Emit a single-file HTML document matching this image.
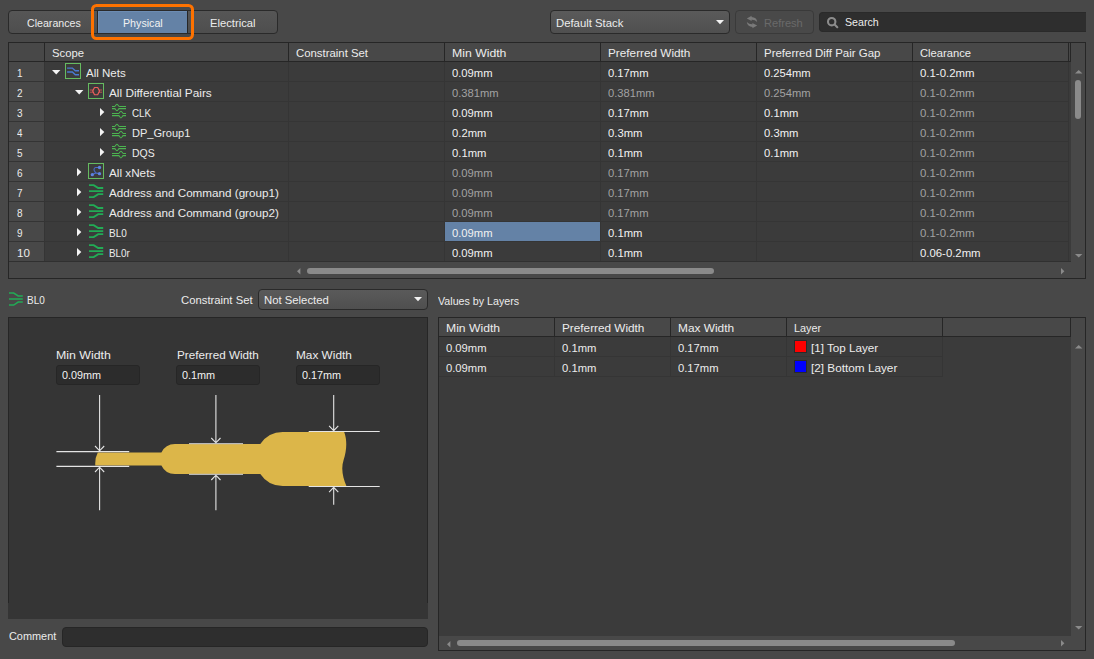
<!DOCTYPE html>
<html>
<head>
<meta charset="utf-8">
<title>Constraint Manager</title>
<style>
html,body{margin:0;padding:0;}
body{width:1094px;height:659px;background:#484848;overflow:hidden;position:relative;
  font-family:"Liberation Sans",sans-serif;font-size:11.5px;color:#ececec;}
.a{position:absolute;}
.t{position:absolute;white-space:nowrap;line-height:14px;transform-origin:0 0;}
.dk{position:absolute;background:#262626;}
.rs{position:absolute;height:1px;background:#353535;}
.cs{position:absolute;width:1px;background:#353535;}
.dd{position:absolute;box-sizing:border-box;border:1px solid #2a2a2a;border-radius:4px;background:linear-gradient(#5a5a5a,#4f4f4f);}
.inp{position:absolute;box-sizing:border-box;border:1px solid #262626;border-radius:3px;background:#2c2c2c;}
.thumb{position:absolute;background:#8a8a8a;border-radius:3px;}
svg{position:absolute;overflow:visible;}
</style>
</head>
<body>
<!-- ===== top toolbar ===== -->
<div class="dd" style="left:8px;top:10px;width:270px;height:24px;background:linear-gradient(#565656,#4e4e4e);"></div>
<div class="a" style="left:98px;top:11px;width:89px;height:22px;background:#6482a6;box-shadow:inset 1px 1px 0 #6c8cb3;"></div>
<div class="dk" style="left:97px;top:11px;width:1px;height:22px;"></div>
<div class="dk" style="left:187px;top:11px;width:1px;height:22px;"></div>
<svg style="left:88px;top:1px" width="110" height="42"><rect x="4.5" y="4.5" width="100" height="33" rx="4" ry="4" fill="none" stroke="#fe7200" stroke-width="3"/></svg>

<div class="dd" style="left:550px;top:10px;width:180px;height:24px;"></div>
<svg style="left:716px;top:20px" width="8" height="5"><path d="M0 0H8L4 4.3Z" fill="#f2f2f2"/></svg>

<div class="a" style="left:735px;top:10px;width:79px;height:24px;box-sizing:border-box;border:1px solid #3a3a3a;border-radius:4px;background:#494949;"></div>
<svg style="left:740px;top:8px" width="20" height="24" viewBox="740 8 20 24">
 <path id="ra" d="M746.8 18.4L751.7 15.7L751.5 17.1Q756.6 17.3 757.2 22Q754.9 19.5 751.5 19.7L751.7 21Z" fill="#7a7a7a"/>
 <path d="M746.8 18.4L751.7 15.7L751.5 17.1Q756.6 17.3 757.2 22Q754.9 19.5 751.5 19.7L751.7 21Z" fill="#7a7a7a" transform="rotate(180 752 22)"/>
</svg>

<div class="a" style="left:819px;top:12px;width:267px;height:20px;box-sizing:border-box;background:#2e2e2e;border:1px solid #2a2a2a;border-right:none;border-radius:4px 0 0 4px;"></div>
<svg style="left:820px;top:10px" width="24" height="24" viewBox="820 10 24 24">
 <circle cx="831.7" cy="21.7" r="3.7" fill="none" stroke="#8c8c8c" stroke-width="2.1"/>
 <path d="M834.6 24.6L837.3 27.2" stroke="#8c8c8c" stroke-width="2.1" stroke-linecap="round"/>
</svg>

<!-- ===== main table ===== -->
<div class="a" style="left:8px;top:42px;width:1078px;height:237px;box-sizing:border-box;border:1px solid #262626;background:#484848;"></div>
<div class="a" style="left:45px;top:62px;width:1026px;height:200px;background:#3b3b3b;"></div>
<div class="a" style="left:44px;top:62px;width:1px;height:200px;background:#353535;"></div>
<div class="a" style="left:445px;top:222px;width:155px;height:19px;background:#6482a6;"></div>
<div class="dk" style="left:9px;top:61px;width:1062px;height:1px;"></div>
<div class="dk" style="left:44px;top:43px;width:1px;height:18px;"></div>
<div class="dk" style="left:288px;top:43px;width:1px;height:18px;"></div>
<div class="dk" style="left:444px;top:43px;width:1px;height:18px;"></div>
<div class="dk" style="left:600px;top:43px;width:1px;height:18px;"></div>
<div class="dk" style="left:756px;top:43px;width:1px;height:18px;"></div>
<div class="dk" style="left:912px;top:43px;width:1px;height:18px;"></div>
<div class="dk" style="left:1068px;top:43px;width:1px;height:18px;"></div>
<div class="dk" style="left:1070px;top:43px;width:1px;height:18px;"></div>
<div class="a" style="left:9px;top:81px;width:35px;height:1px;background:#343434;"></div>
<div class="rs" style="left:45px;top:81px;width:1024px;"></div>
<div class="a" style="left:9px;top:101px;width:35px;height:1px;background:#343434;"></div>
<div class="rs" style="left:45px;top:101px;width:1024px;"></div>
<div class="a" style="left:9px;top:121px;width:35px;height:1px;background:#343434;"></div>
<div class="rs" style="left:45px;top:121px;width:1024px;"></div>
<div class="a" style="left:9px;top:141px;width:35px;height:1px;background:#343434;"></div>
<div class="rs" style="left:45px;top:141px;width:1024px;"></div>
<div class="a" style="left:9px;top:161px;width:35px;height:1px;background:#343434;"></div>
<div class="rs" style="left:45px;top:161px;width:1024px;"></div>
<div class="a" style="left:9px;top:181px;width:35px;height:1px;background:#343434;"></div>
<div class="rs" style="left:45px;top:181px;width:1024px;"></div>
<div class="a" style="left:9px;top:201px;width:35px;height:1px;background:#343434;"></div>
<div class="rs" style="left:45px;top:201px;width:1024px;"></div>
<div class="a" style="left:9px;top:221px;width:35px;height:1px;background:#343434;"></div>
<div class="rs" style="left:45px;top:221px;width:1024px;"></div>
<div class="a" style="left:9px;top:241px;width:35px;height:1px;background:#343434;"></div>
<div class="rs" style="left:45px;top:241px;width:1024px;"></div>
<div class="a" style="left:9px;top:261px;width:35px;height:1px;background:#343434;"></div>
<div class="rs" style="left:45px;top:261px;width:1024px;"></div>
<div class="cs" style="left:288px;top:62px;height:200px;"></div>
<div class="cs" style="left:444px;top:62px;height:200px;"></div>
<div class="cs" style="left:600px;top:62px;height:200px;"></div>
<div class="cs" style="left:756px;top:62px;height:200px;"></div>
<div class="cs" style="left:912px;top:62px;height:200px;"></div>
<div class="cs" style="left:1068px;top:62px;height:200px;"></div>
<div class="a" style="left:9px;top:261px;width:1062px;height:1px;background:#303030;"></div>

<!-- scrollbars main -->
<svg style="left:1075px;top:70px" width="8" height="4"><path d="M0 3.6H7.4L3.7 0Z" fill="#8a8a8a"/></svg>
<svg style="left:1075px;top:253.5px" width="8" height="4"><path d="M0 0H7.4L3.7 3.6Z" fill="#8a8a8a"/></svg>
<div class="thumb" style="left:1075px;top:80px;width:6px;height:39px;"></div>
<svg style="left:297px;top:267.5px" width="4" height="7"><path d="M3.4 0V6.6L0 3.3Z" fill="#8a8a8a"/></svg>
<svg style="left:1061px;top:267.5px" width="4" height="7"><path d="M0 0V6.6L3.4 3.3Z" fill="#8a8a8a"/></svg>
<div class="thumb" style="left:307px;top:268px;width:407px;height:6px;"></div>

<svg style="left:51.8px;top:69.6px" width="9" height="5"><path d="M0 0H8.4L4.2 4.5Z" fill="#f4f4f4"/></svg>
<svg style="left:65px;top:63px" width="16" height="16" viewBox="0 0 16 16"><rect x="0.5" y="0.5" width="15" height="15" fill="none" stroke="#66bb60" stroke-width="1"/><path d="M2.1 5.1H7.4L10.3 7.7H14M2.1 9H7.4L10.3 11.8H14" fill="none" stroke="#4a7ad2" stroke-width="1.4"/></svg>
<svg style="left:74.8px;top:89.6px" width="9" height="5"><path d="M0 0H8.4L4.2 4.5Z" fill="#f4f4f4"/></svg>
<svg style="left:88px;top:83px" width="16" height="16" viewBox="0 0 16 16"><rect x="0.5" y="0.5" width="15" height="15" fill="none" stroke="#66bb60" stroke-width="1"/><path d="M1.9 7H5.3M1.9 9.2H5.3M10.9 7H14.1M10.9 9.2H14.1" fill="none" stroke="#c05250" stroke-width="1"/><path d="M4.7 8.1L6.5 4.5H9.7L11.5 8.1L9.7 11.7H6.5Z" fill="none" stroke="#ee605c" stroke-width="1.15" stroke-linejoin="round"/></svg>
<svg style="left:100px;top:108px" width="5" height="9"><path d="M0 0V8.2L4.3 4.1Z" fill="#f4f4f4"/></svg>
<svg style="left:112px;top:102px" width="14" height="18" viewBox="0 0 14 18"><path d="M0 4.4H2.6Q3.2 4.4 3.6 3.6Q4.2 2.2 4.95 2.2Q5.7 2.2 6.3 3.6Q6.7 4.4 7.3 4.4H14M0 6.6H2.6Q3.2 6.6 3.6 7.4Q4.2 8.8 4.95 8.8Q5.7 8.8 6.3 7.4Q6.7 6.6 7.3 6.6H14M0 11.4H6.6Q7.2 11.4 7.6 10.6Q8.2 9.3 8.95 9.3Q9.7 9.3 10.3 10.6Q10.7 11.4 11.3 11.4H14M0 13.6H6.6Q7.2 13.6 7.6 14.4Q8.2 15.9 8.95 15.9Q9.7 15.9 10.3 14.4Q10.7 13.6 11.3 13.6H14" fill="none" stroke="#4cb450" stroke-width="1.05"/></svg>
<svg style="left:100px;top:128px" width="5" height="9"><path d="M0 0V8.2L4.3 4.1Z" fill="#f4f4f4"/></svg>
<svg style="left:112px;top:122px" width="14" height="18" viewBox="0 0 14 18"><path d="M0 4.4H2.6Q3.2 4.4 3.6 3.6Q4.2 2.2 4.95 2.2Q5.7 2.2 6.3 3.6Q6.7 4.4 7.3 4.4H14M0 6.6H2.6Q3.2 6.6 3.6 7.4Q4.2 8.8 4.95 8.8Q5.7 8.8 6.3 7.4Q6.7 6.6 7.3 6.6H14M0 11.4H6.6Q7.2 11.4 7.6 10.6Q8.2 9.3 8.95 9.3Q9.7 9.3 10.3 10.6Q10.7 11.4 11.3 11.4H14M0 13.6H6.6Q7.2 13.6 7.6 14.4Q8.2 15.9 8.95 15.9Q9.7 15.9 10.3 14.4Q10.7 13.6 11.3 13.6H14" fill="none" stroke="#4cb450" stroke-width="1.05"/></svg>
<svg style="left:100px;top:148px" width="5" height="9"><path d="M0 0V8.2L4.3 4.1Z" fill="#f4f4f4"/></svg>
<svg style="left:112px;top:142px" width="14" height="18" viewBox="0 0 14 18"><path d="M0 4.4H2.6Q3.2 4.4 3.6 3.6Q4.2 2.2 4.95 2.2Q5.7 2.2 6.3 3.6Q6.7 4.4 7.3 4.4H14M0 6.6H2.6Q3.2 6.6 3.6 7.4Q4.2 8.8 4.95 8.8Q5.7 8.8 6.3 7.4Q6.7 6.6 7.3 6.6H14M0 11.4H6.6Q7.2 11.4 7.6 10.6Q8.2 9.3 8.95 9.3Q9.7 9.3 10.3 10.6Q10.7 11.4 11.3 11.4H14M0 13.6H6.6Q7.2 13.6 7.6 14.4Q8.2 15.9 8.95 15.9Q9.7 15.9 10.3 14.4Q10.7 13.6 11.3 13.6H14" fill="none" stroke="#4cb450" stroke-width="1.05"/></svg>
<svg style="left:77px;top:168px" width="5" height="9"><path d="M0 0V8.2L4.3 4.1Z" fill="#f4f4f4"/></svg>
<svg style="left:88px;top:163px" width="16" height="16" viewBox="0 0 16 16"><rect x="0.5" y="0.5" width="15" height="15" fill="none" stroke="#66bb60" stroke-width="1"/><path d="M11.5 4.5H7.8Q6 4.6 6 6.4Q6 7.6 6.8 8.4L7.6 9.9L11.5 10.7M7.6 9.9L4.3 11.7" fill="none" stroke="#4a6ccc" stroke-width="1.1"/><circle cx="11.5" cy="4.5" r="1.65" fill="#5f83e0"/><circle cx="11.5" cy="10.7" r="1.65" fill="#5f83e0"/><circle cx="4.3" cy="11.7" r="1.65" fill="#5f83e0"/></svg>
<svg style="left:77px;top:188px" width="5" height="9"><path d="M0 0V8.2L4.3 4.1Z" fill="#f4f4f4"/></svg>
<svg style="left:88.9px;top:183.9px" width="15" height="15" viewBox="0 0 15 15"><path d="M0 1.1H4.7L9.2 4H14.2M0 7.1H14.2M0 13.1H4.7L9.2 10.1H14.2" fill="none" stroke="#22ab55" stroke-width="1.9"/></svg>
<svg style="left:77px;top:208px" width="5" height="9"><path d="M0 0V8.2L4.3 4.1Z" fill="#f4f4f4"/></svg>
<svg style="left:88.9px;top:203.9px" width="15" height="15" viewBox="0 0 15 15"><path d="M0 1.1H4.7L9.2 4H14.2M0 7.1H14.2M0 13.1H4.7L9.2 10.1H14.2" fill="none" stroke="#22ab55" stroke-width="1.9"/></svg>
<svg style="left:77px;top:228px" width="5" height="9"><path d="M0 0V8.2L4.3 4.1Z" fill="#f4f4f4"/></svg>
<svg style="left:88.9px;top:223.9px" width="15" height="15" viewBox="0 0 15 15"><path d="M0 1.1H4.7L9.2 4H14.2M0 7.1H14.2M0 13.1H4.7L9.2 10.1H14.2" fill="none" stroke="#22ab55" stroke-width="1.9"/></svg>
<svg style="left:77px;top:248px" width="5" height="9"><path d="M0 0V8.2L4.3 4.1Z" fill="#f4f4f4"/></svg>
<svg style="left:88.9px;top:243.9px" width="15" height="15" viewBox="0 0 15 15"><path d="M0 1.1H4.7L9.2 4H14.2M0 7.1H14.2M0 13.1H4.7L9.2 10.1H14.2" fill="none" stroke="#22ab55" stroke-width="1.9"/></svg>
<svg style="left:9px;top:292.3px" width="15" height="15" viewBox="0 0 15 15"><path d="M0 1.1H4.7L9.2 4H13.8M0 7.1H13.8M0 13.1H4.7L9.2 10.1H13.8" fill="none" stroke="#22ab55" stroke-width="1.5"/></svg>

<!-- ===== lower left ===== -->
<div class="dd" style="left:258px;top:289px;width:170px;height:21px;"></div>
<svg style="left:414px;top:297px" width="8" height="5"><path d="M0 0H8L4 4.3Z" fill="#f2f2f2"/></svg>
<div class="a" style="left:8px;top:317px;width:420px;height:302px;background:#353535;"></div>
<div class="dk" style="left:8px;top:317px;width:420px;height:1px;"></div>
<div class="dk" style="left:8px;top:317px;width:1px;height:286px;"></div>
<div class="dk" style="left:427px;top:317px;width:1px;height:286px;"></div>
<div class="inp" style="left:56px;top:365px;width:84px;height:20px;"></div>
<div class="inp" style="left:176px;top:365px;width:84px;height:20px;"></div>
<div class="inp" style="left:296px;top:365px;width:84px;height:20px;"></div>
<svg style="left:0;top:0" width="1094" height="659">
<path d="M97.8 452.5H161.4A15 15 0 0 1 175 444H260.3A27 27 0 0 1 283 432H344.2C347.5 441 346.5 451 343.6 460S343 478 346.4 486H283A27 27 0 0 1 260.3 474H175A15 15 0 0 1 161.4 465.5H95.3Q94.8 458 97.8 452.5Z" fill="#dcb649"/>
<path d="M56.4 451.6H129.2M56.4 466.4H129.2" stroke="#e4e4e4" stroke-width="1.1"/>
<path d="M189 443.6H243M189 474.4H243" stroke="#b8b8b8" stroke-width="1.3"/>
<path d="M308.7 431.5H379.7M308.7 486.5H379.7" stroke="#e4e4e4" stroke-width="1.1"/>
<path d="M99.6 395V451.2M95.0 446.0L99.6 450.8L104.19999999999999 446.0" fill="none" stroke="#e4e4e4" stroke-width="1.1"/>
<path d="M99.6 510.3V466.8M95.0 472.0L99.6 467.2L104.19999999999999 472.0" fill="none" stroke="#e4e4e4" stroke-width="1.1"/>
<path d="M215.9 395V443.2M211.3 438.0L215.9 442.8L220.5 438.0" fill="none" stroke="#e4e4e4" stroke-width="1.1"/>
<path d="M215.9 510.3V474.8M211.3 480.0L215.9 475.2L220.5 480.0" fill="none" stroke="#e4e4e4" stroke-width="1.1"/>
<path d="M333.7 395V431.1M329.09999999999997 425.90000000000003L333.7 430.70000000000005L338.3 425.90000000000003" fill="none" stroke="#e4e4e4" stroke-width="1.1"/>
<path d="M333.7 504.8V486.9M329.09999999999997 492.09999999999997L333.7 487.29999999999995L338.3 492.09999999999997" fill="none" stroke="#e4e4e4" stroke-width="1.1"/>
</svg>
<div class="inp" style="left:62px;top:627px;width:366px;height:20px;background:#2e2e2e;border-radius:4px;"></div>

<!-- ===== lower right ===== -->
<div class="a" style="left:438px;top:317px;width:648px;height:334px;box-sizing:border-box;border:1px solid #262626;background:#484848;"></div>
<div class="a" style="left:439px;top:337px;width:632px;height:299px;background:#3b3b3b;"></div>
<div class="dk" style="left:439px;top:336px;width:632px;height:1px;"></div>
<div class="dk" style="left:554px;top:318px;width:1px;height:18px;"></div>
<div class="dk" style="left:670px;top:318px;width:1px;height:18px;"></div>
<div class="dk" style="left:786px;top:318px;width:1px;height:18px;"></div>
<div class="dk" style="left:942px;top:318px;width:1px;height:18px;"></div>
<div class="dk" style="left:1070px;top:318px;width:1px;height:18px;"></div>
<div class="rs" style="left:439px;top:356px;width:504px;"></div>
<div class="rs" style="left:439px;top:376px;width:504px;"></div>
<div class="cs" style="left:554px;top:337px;height:40px;"></div>
<div class="cs" style="left:670px;top:337px;height:40px;"></div>
<div class="cs" style="left:786px;top:337px;height:40px;"></div>
<div class="cs" style="left:942px;top:337px;height:40px;"></div>
<div class="a" style="left:794px;top:340px;width:13px;height:13px;box-sizing:border-box;border:1px solid #2a2a2a;background:#ff0000;"></div>
<div class="a" style="left:794px;top:360px;width:13px;height:13px;box-sizing:border-box;border:1px solid #2a2a2a;background:#0000ff;"></div>
<svg style="left:1075px;top:345px" width="8" height="4"><path d="M0 3.4H7.4L3.7 0Z" fill="#8a8a8a"/></svg>
<svg style="left:1075px;top:625.6px" width="8" height="4"><path d="M0 0H7.4L3.7 3.4Z" fill="#8a8a8a"/></svg>
<svg style="left:446.6px;top:640.5px" width="4" height="7"><path d="M3.4 0V6.4L0 3.2Z" fill="#8a8a8a"/></svg>
<svg style="left:1061px;top:640.3px" width="4" height="7"><path d="M0 0V6.6L3.4 3.3Z" fill="#8a8a8a"/></svg>
<div class="thumb" style="left:457px;top:640px;width:498px;height:6px;"></div>

<!-- ===== text ===== -->
<div class="t" style="left:26.50px;top:16.2px;transform:scaleX(0.9244)">Clearances</div>
<div class="t" style="left:122.80px;top:16.2px;color:#f2f2f2;transform:scaleX(0.9274)">Physical</div>
<div class="t" style="left:209.60px;top:16.2px;transform:scaleX(0.9762)">Electrical</div>
<div class="t" style="left:555.90px;top:16.2px;transform:scaleX(0.9848)">Default Stack</div>
<div class="t" style="left:764.30px;top:16.2px;color:#6a6a6a;transform:scaleX(0.9631)">Refresh</div>
<div class="t" style="left:845.30px;top:15.2px;transform:scaleX(0.9239)">Search</div>
<div class="t" style="left:52.10px;top:46.2px;transform:scaleX(0.9810)">Scope</div>
<div class="t" style="left:296.00px;top:46.2px;transform:scaleX(0.9881)">Constraint Set</div>
<div class="t" style="left:451.70px;top:46.2px;transform:scaleX(1.0646)">Min Width</div>
<div class="t" style="left:607.60px;top:46.2px;transform:scaleX(1.0233)">Preferred Width</div>
<div class="t" style="left:763.60px;top:46.2px;transform:scaleX(0.9969)">Preferred Diff Pair Gap</div>
<div class="t" style="left:920.10px;top:46.2px;transform:scaleX(0.9727)">Clearance</div>
<div class="t" style="left:16.50px;top:66.2px;transform:scaleX(0.8667)">1</div>
<div class="t" style="left:86.30px;top:66.2px;transform:scaleX(1.0032)">All Nets</div>
<div class="t" style="left:452.30px;top:66.2px;color:#f2f2f2;transform:scaleX(0.9765)">0.09mm</div>
<div class="t" style="left:608.20px;top:66.2px;color:#f2f2f2;transform:scaleX(0.9765)">0.17mm</div>
<div class="t" style="left:764.20px;top:66.2px;color:#f2f2f2;transform:scaleX(0.9713)">0.254mm</div>
<div class="t" style="left:920.10px;top:66.2px;color:#f2f2f2;transform:scaleX(0.9930)">0.1-0.2mm</div>
<div class="t" style="left:16.50px;top:86.2px;transform:scaleX(0.8667)">2</div>
<div class="t" style="left:109.30px;top:86.2px;transform:scaleX(1.0261)">All Differential Pairs</div>
<div class="t" style="left:452.30px;top:86.2px;color:#a2a2a2;transform:scaleX(0.9713)">0.381mm</div>
<div class="t" style="left:608.20px;top:86.2px;color:#a2a2a2;transform:scaleX(0.9713)">0.381mm</div>
<div class="t" style="left:764.20px;top:86.2px;color:#a2a2a2;transform:scaleX(0.9713)">0.254mm</div>
<div class="t" style="left:920.10px;top:86.2px;color:#a2a2a2;transform:scaleX(0.9930)">0.1-0.2mm</div>
<div class="t" style="left:16.50px;top:106.2px;transform:scaleX(0.8667)">3</div>
<div class="t" style="left:132.00px;top:106.2px;transform:scaleX(0.8546)">CLK</div>
<div class="t" style="left:452.30px;top:106.2px;color:#f2f2f2;transform:scaleX(0.9765)">0.09mm</div>
<div class="t" style="left:608.20px;top:106.2px;color:#f2f2f2;transform:scaleX(0.9765)">0.17mm</div>
<div class="t" style="left:764.20px;top:106.2px;color:#f2f2f2;transform:scaleX(0.9778)">0.1mm</div>
<div class="t" style="left:920.10px;top:106.2px;color:#a2a2a2;transform:scaleX(0.9930)">0.1-0.2mm</div>
<div class="t" style="left:16.50px;top:126.2px;transform:scaleX(0.8500)">4</div>
<div class="t" style="left:132.00px;top:126.2px;transform:scaleX(0.9613)">DP_Group1</div>
<div class="t" style="left:452.30px;top:126.2px;color:#f2f2f2;transform:scaleX(0.9778)">0.2mm</div>
<div class="t" style="left:608.20px;top:126.2px;color:#f2f2f2;transform:scaleX(0.9778)">0.3mm</div>
<div class="t" style="left:764.20px;top:126.2px;color:#f2f2f2;transform:scaleX(0.9778)">0.3mm</div>
<div class="t" style="left:920.10px;top:126.2px;color:#a2a2a2;transform:scaleX(0.9930)">0.1-0.2mm</div>
<div class="t" style="left:16.50px;top:146.2px;transform:scaleX(0.8667)">5</div>
<div class="t" style="left:132.00px;top:146.2px;transform:scaleX(0.9109)">DQS</div>
<div class="t" style="left:452.30px;top:146.2px;color:#f2f2f2;transform:scaleX(0.9778)">0.1mm</div>
<div class="t" style="left:608.20px;top:146.2px;color:#f2f2f2;transform:scaleX(0.9778)">0.1mm</div>
<div class="t" style="left:764.20px;top:146.2px;color:#f2f2f2;transform:scaleX(0.9778)">0.1mm</div>
<div class="t" style="left:920.10px;top:146.2px;color:#a2a2a2;transform:scaleX(0.9930)">0.1-0.2mm</div>
<div class="t" style="left:16.50px;top:166.2px;transform:scaleX(0.8667)">6</div>
<div class="t" style="left:109.30px;top:166.2px;transform:scaleX(1.0193)">All xNets</div>
<div class="t" style="left:452.30px;top:166.2px;color:#a2a2a2;transform:scaleX(0.9765)">0.09mm</div>
<div class="t" style="left:608.20px;top:166.2px;color:#a2a2a2;transform:scaleX(0.9765)">0.17mm</div>
<div class="t" style="left:920.10px;top:166.2px;color:#a2a2a2;transform:scaleX(0.9930)">0.1-0.2mm</div>
<div class="t" style="left:16.50px;top:186.2px;transform:scaleX(0.8667)">7</div>
<div class="t" style="left:109.30px;top:186.2px;transform:scaleX(1.0140)">Address and Command (group1)</div>
<div class="t" style="left:452.30px;top:186.2px;color:#a2a2a2;transform:scaleX(0.9765)">0.09mm</div>
<div class="t" style="left:608.20px;top:186.2px;color:#a2a2a2;transform:scaleX(0.9765)">0.17mm</div>
<div class="t" style="left:920.10px;top:186.2px;color:#a2a2a2;transform:scaleX(0.9930)">0.1-0.2mm</div>
<div class="t" style="left:16.50px;top:206.2px;transform:scaleX(0.8667)">8</div>
<div class="t" style="left:109.30px;top:206.2px;transform:scaleX(1.0140)">Address and Command (group2)</div>
<div class="t" style="left:452.30px;top:206.2px;color:#a2a2a2;transform:scaleX(0.9765)">0.09mm</div>
<div class="t" style="left:608.20px;top:206.2px;color:#a2a2a2;transform:scaleX(0.9765)">0.17mm</div>
<div class="t" style="left:920.10px;top:206.2px;color:#a2a2a2;transform:scaleX(0.9930)">0.1-0.2mm</div>
<div class="t" style="left:16.50px;top:226.2px;transform:scaleX(0.8667)">9</div>
<div class="t" style="left:109.30px;top:226.2px;transform:scaleX(0.8671)">BL0</div>
<div class="t" style="left:452.30px;top:226.2px;color:#f2f2f2;transform:scaleX(0.9765)">0.09mm</div>
<div class="t" style="left:608.20px;top:226.2px;color:#f2f2f2;transform:scaleX(0.9778)">0.1mm</div>
<div class="t" style="left:920.10px;top:226.2px;color:#a2a2a2;transform:scaleX(0.9930)">0.1-0.2mm</div>
<div class="t" style="left:16.50px;top:246.2px;transform:scaleX(1.0084)">10</div>
<div class="t" style="left:109.30px;top:246.2px;transform:scaleX(0.8585)">BL0r</div>
<div class="t" style="left:452.30px;top:246.2px;color:#f2f2f2;transform:scaleX(0.9765)">0.09mm</div>
<div class="t" style="left:608.20px;top:246.2px;color:#f2f2f2;transform:scaleX(0.9778)">0.1mm</div>
<div class="t" style="left:920.10px;top:246.2px;color:#f2f2f2;transform:scaleX(0.9872)">0.06-0.2mm</div>
<div class="t" style="left:27.40px;top:293.2px;transform:scaleX(0.8671)">BL0</div>
<div class="t" style="left:180.50px;top:293.2px;transform:scaleX(0.9827)">Constraint Set</div>
<div class="t" style="left:263.60px;top:293.2px;transform:scaleX(0.9840)">Not Selected</div>
<div class="t" style="left:55.70px;top:348.2px;transform:scaleX(1.0744)">Min Width</div>
<div class="t" style="left:176.80px;top:348.2px;transform:scaleX(1.0146)">Preferred Width</div>
<div class="t" style="left:295.60px;top:348.2px;transform:scaleX(1.0274)">Max Width</div>
<div class="t" style="left:62.20px;top:368.2px;color:#f2f2f2;transform:scaleX(0.9399)">0.09mm</div>
<div class="t" style="left:181.90px;top:368.2px;color:#f2f2f2;transform:scaleX(0.9431)">0.1mm</div>
<div class="t" style="left:302.00px;top:368.2px;color:#f2f2f2;transform:scaleX(0.9423)">0.17mm</div>
<div class="t" style="left:8.60px;top:629.2px;transform:scaleX(0.9477)">Comment</div>
<div class="t" style="left:438.40px;top:294.2px;transform:scaleX(0.9280)">Values by Layers</div>
<div class="t" style="left:445.80px;top:321.2px;transform:scaleX(1.0586)">Min Width</div>
<div class="t" style="left:561.70px;top:321.2px;transform:scaleX(1.0233)">Preferred Width</div>
<div class="t" style="left:677.80px;top:321.2px;transform:scaleX(1.0330)">Max Width</div>
<div class="t" style="left:793.90px;top:321.2px;transform:scaleX(0.9400)">Layer</div>
<div class="t" style="left:446.40px;top:341.2px;transform:scaleX(0.9765)">0.09mm</div>
<div class="t" style="left:562.30px;top:341.2px;transform:scaleX(0.9778)">0.1mm</div>
<div class="t" style="left:678.40px;top:341.2px;transform:scaleX(0.9765)">0.17mm</div>
<div class="t" style="left:446.40px;top:361.2px;transform:scaleX(0.9765)">0.09mm</div>
<div class="t" style="left:562.30px;top:361.2px;transform:scaleX(0.9778)">0.1mm</div>
<div class="t" style="left:678.40px;top:361.2px;transform:scaleX(0.9765)">0.17mm</div>
<div class="t" style="left:811.30px;top:341.2px;transform:scaleX(1.0142)">[1] Top Layer</div>
<div class="t" style="left:811.30px;top:361.2px;transform:scaleX(1.0231)">[2] Bottom Layer</div>
</body>
</html>
